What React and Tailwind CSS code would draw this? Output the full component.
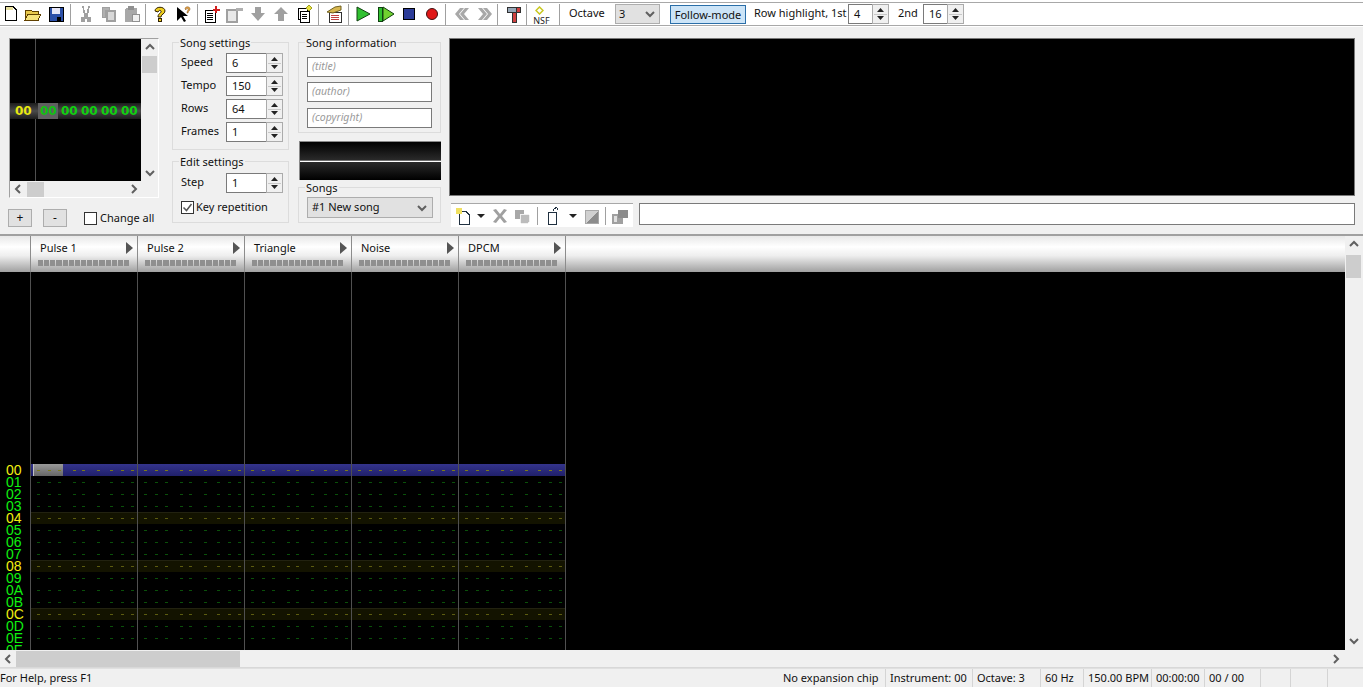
import React from 'react';

const uiFont = "font-['Noto_Sans','Liberation_Sans',sans-serif]";

const Sep = ({ l = 0, r = 0 }) => (
  <div className="w-px h-[21px] bg-[#a0a0a0] shrink-0" style={{ marginLeft: l, marginRight: r }} />
);

const Ic = ({ children, w = 23, l = 0 }) => (
  <div className="h-[23px] flex items-center justify-center shrink-0" style={{ width: w, marginLeft: l }}>
    <svg width="18" height="18" viewBox="0 0 18 18" shapeRendering="crispEdges">{children}</svg>
  </div>
);

// small chevrons used on all scroll bars
const Chev = ({ dir }) => {
  const d = {
    up: 'M2 8 L6 4 L10 8',
    down: 'M2 4 L6 8 L10 4',
    left: 'M8 2 L4 6 L8 10',
    right: 'M4 2 L8 6 L4 10',
  }[dir];
  return (
    <svg width="12" height="12" viewBox="0 0 12 12" className="shrink-0">
      <path d={d} fill="none" stroke="#606060" strokeWidth="2" />
    </svg>
  );
};

const Spin = ({ value, w = 40 }) => (
  <div className="flex h-[20px] bg-white shrink-0">
    <div className="border border-[#7a7a7a] border-r-0 text-[11px] leading-[18px] pl-[5px] text-[#111]" style={{ width: w }}>
      {value}
    </div>
    <div className="w-[17px] border border-[#ababab] bg-[#f0f0f0] flex flex-col items-center justify-between py-[2px]">
      <svg width="9" height="6" viewBox="0 0 9 6"><path d="M4.500 1 L8 5 H1 Z" fill="#222" /></svg>
      <div className="w-[13px] h-px bg-[#c8c8c8]" />
      <svg width="9" height="6" viewBox="0 0 9 6"><path d="M1 1 H8 L4.500 5 Z" fill="#222" /></svg>
    </div>
  </div>
);

const Group = ({ title, className, children }) => (
  <div className={`relative border border-[#dcdcdc] ${className}`}>
    <span className="absolute left-[6px] -top-[6px] bg-[#f0f0f0] px-px text-[11px] leading-[12px] text-[#111]">{title}</span>
    {children}
  </div>
);

const SettingRow = ({ label, value }) => (
  <div className="flex items-center justify-between h-[20px]">
    <span className="text-[11px] leading-[18px] mb-[2px] text-[#111]">{label}</span>
    <Spin value={value} />
  </div>
);

const InfoField = ({ text, className = '' }) => (
  <div className={`h-[20px] border border-[#7a7a7a] bg-white px-[4px] text-[10.500px] leading-[17px] italic text-[#9a9a9a] ${className}`}>{text}</div>
);

const channels = ['Pulse 1', 'Pulse 2', 'Triangle', 'Noise', 'DPCM'];
const rows = ['00', '01', '02', '03', '04', '05', '06', '07', '08', '09', '0A', '0B', '0C', '0D', '0E', '0F'];
const dashGaps = [6, 8, 7, 12, 6, 12, 10, 8, 7];

const PatternRow = ({ index, first }) => {
  const current = index === 0;
  const hl = index % 4 === 0 && !current;
  const bg = current
    ? 'bg-[linear-gradient(#34348c,#20206a)]'
    : hl
      ? 'bg-[#131300] border-t border-[#222210]'
      : '';
  const dash = current ? 'bg-[#7c7c18]' : hl ? 'bg-[#5c5c10]' : 'bg-[#0a500a]';
  return (
    <div className={`relative h-[12px] flex items-center shrink-0 ${bg}`}>
      {current && first && (
        <div className="absolute left-[2px] top-0 w-[30px] h-[12px] bg-[linear-gradient(#9a9a9a,#666)] border-l border-[#c0c0c0]" />
      )}
      {dashGaps.map((g, i) => (
        <div key={i} className={`relative w-[3px] h-px shrink-0 ${dash}`} style={{ marginLeft: g }} />
      ))}
    </div>
  );
};

export default function App() {
  return (
    <div className={`w-[1363px] h-[687px] overflow-hidden flex flex-col bg-[#f0f0f0] ${uiFont}`}>
      {/* toolbar */}
      <div className="h-[27px] bg-white pt-[2px] shrink-0">
        <div className="h-[24px] border-y border-[#a8a8a8] flex items-center text-[11px] text-[#111] whitespace-nowrap">
          <Ic w={22}>
            <path d="M3.500 1.500 H11 L14.500 5 V15.500 H3.500 Z" fill="#fff" stroke="#000" />
            <rect x="4" y="2" width="7" height="3" fill="#e8e0a0" />
          </Ic>
          <Ic w={22}>
            <path d="M1 5 H7 L8 6 H14 V15 H1 Z" fill="#e8c84c" stroke="#604000" />
            <path d="M4 9 H17 L14 15 H1 Z" fill="#f6e27a" stroke="#604000" />
          </Ic>
          <Ic>
            <rect x="2" y="2" width="14" height="14" fill="#2c50a8" stroke="#000" />
            <rect x="5" y="3" width="8" height="6" fill="#e8e8f8" />
            <rect x="10" y="12" width="4" height="4" fill="#000" />
          </Ic>
          <Sep l={3} r={3} />
          <Ic>
            <path d="M5 1 L7 1 L8 8 H10 L11 1 L13 1 L11 10 V12 H14 V17 H10 V14 H8 V17 H4 V12 H7 V10 Z" fill="#a0a0a0" />
          </Ic>
          <Ic>
            <path d="M2 2 H9 V5 H5 V12 H2 Z" fill="#b0b0b0" stroke="#a0a0a0" />
            <path d="M7 6 H15 V16 H7 Z" fill="#d8d8d8" stroke="#a0a0a0" strokeWidth="2" />
          </Ic>
          <Ic>
            <rect x="2" y="3" width="12" height="14" rx="2" fill="#a8a8a8" />
            <rect x="5" y="1" width="6" height="4" fill="#909090" />
            <rect x="9" y="9" width="7" height="7" fill="#f0f0f0" stroke="#909090" />
          </Ic>
          <Sep l={2} r={2} />
          <Ic>
            <path d="M4 6 C4 1 14 1 14 6 C14 9 10 9 10 12 H7 C7 8 11 8 10 6 C9 5 8 5 7 7 Z" fill="#f0d020" stroke="#302000" shapeRendering="auto" />
            <rect x="7" y="13" width="3" height="3" fill="#f0d020" stroke="#302000" />
          </Ic>
          <Ic>
            <path d="M3 2 V16 L7 12 L10 17 L12 16 L9 11 L14 11 Z" fill="#000" shapeRendering="auto" />
            <path d="M11 4 C11 1 16 1 16 4 C16 6 14 6 14 8 H13 C13 5 15 5 14 4 C13 3 12 4 12 5 Z" fill="#e0a040" stroke="#805020" strokeWidth=".5" shapeRendering="auto" />
          </Ic>
          <Sep l={3} r={2} />
          <Ic>
            <rect x="2" y="5" width="10" height="12" fill="#fff" stroke="#000" />
            <path d="M4 8 H10 M4 10 H10 M4 12 H10 M4 14 H10" stroke="#000" />
            <path d="M13 1 V8 M10 4.500 H17" stroke="#d02020" strokeWidth="2" />
          </Ic>
          <Ic>
            <rect x="1" y="5" width="10" height="12" fill="#e8e8e8" stroke="#a0a0a0" strokeWidth="2" />
            <rect x="10" y="3" width="7" height="3" fill="#b0b0b0" />
          </Ic>
          <Ic>
            <path d="M6 2 H12 V8 H16 L9 16 L2 8 H6 Z" fill="#a0a0a0" shapeRendering="auto" />
          </Ic>
          <Ic>
            <path d="M6 16 H12 V9 H16 L9 2 L2 9 H6 Z" fill="#a0a0a0" shapeRendering="auto" />
          </Ic>
          <Ic>
            <rect x="3" y="3" width="9" height="11" fill="#fff" stroke="#000" />
            <rect x="5" y="6" width="9" height="11" fill="#fff" stroke="#000" />
            <path d="M7 9 H12 M7 11 H12 M7 13 H12" stroke="#000" />
            <path d="M14 0 L17 3 L14 6 L11 3 Z" fill="#e8e040" stroke="#a0a020" shapeRendering="auto" />
          </Ic>
          <Sep l={3} r={3} />
          <Ic>
            <rect x="4" y="7" width="12" height="10" fill="#fff" stroke="#303030" />
            <path d="M6 10 H14 M6 12 H14 M6 14 H14" stroke="#c04040" />
            <path d="M2 7 L10 2 L16 1 L16 5 L8 8 Z" fill="#d8b850" stroke="#706020" shapeRendering="auto" />
          </Ic>
          <Sep l={3} r={2} />
          <Ic>
            <path d="M3 2 L16 9 L3 16 Z" fill="#30c030" stroke="#104010" shapeRendering="auto" />
          </Ic>
          <Ic>
            <rect x="1" y="2" width="4" height="14" fill="#30c030" stroke="#104010" />
            <path d="M6 2 L17 9 L6 16 Z" fill="#70d030" stroke="#104010" shapeRendering="auto" />
          </Ic>
          <Ic>
            <rect x="3" y="3" width="11" height="11" fill="#2c3c98" stroke="#000" />
          </Ic>
          <Ic>
            <circle cx="9" cy="9" r="5.500" fill="#e01818" stroke="#401010" shapeRendering="auto" />
          </Ic>
          <Sep l={2} r={4} />
          <Ic>
            <path d="M7 3 H11 L6 9 L11 15 H7 L2 9 Z M12 3 H16 L11 9 L16 15 H12 L7 9 Z" fill="#a8a8a8" shapeRendering="auto" />
          </Ic>
          <Ic>
            <path d="M2 3 H6 L11 9 L6 15 H2 L7 9 Z M7 3 H11 L16 9 L11 15 H7 L12 9 Z" fill="#a8a8a8" shapeRendering="auto" />
          </Ic>
          <Sep l={1} r={4} />
          <Ic>
            <rect x="2" y="2" width="13" height="5" fill="#98a8b8" stroke="#303030" />
            <rect x="11" y="2" width="4" height="5" fill="#d04040" stroke="#303030" />
            <rect x="7" y="7" width="4" height="10" fill="#d04040" stroke="#303030" />
          </Ic>
          <Sep l={1} />
          <div className="relative w-[29px] h-[23px] shrink-0 flex flex-col items-center justify-end">
            <svg className="absolute left-[8px] top-[3px]" width="9" height="9" viewBox="0 0 9 9">
              <path d="M4.500 1 L8 4.500 L4.500 8 L1 4.500 Z" fill="none" stroke="#c8c820" strokeWidth="1.500" />
            </svg>
            <span className="text-[9px] leading-[11px] text-[#222]">NSF</span>
          </div>
          <Sep l={3} />
          <span className="ml-[9px] w-[46px] shrink-0 mb-[2px]">Octave</span>
          <div className="w-[45px] h-[20px] shrink-0 bg-[#e1e1e1] border border-[#adadad] flex items-center justify-between pl-[3px] pr-[3px]">
            <span>3</span>
            <Chev dir="down" />
          </div>
          <div className="ml-[10px] w-[76px] h-[19px] mt-[1px] shrink-0 bg-[#cce4f7] border border-[#2a6ea8] text-center leading-[17px]">Follow-mode</div>
          <span className="ml-[8px] w-[94px] shrink-0 mb-[2px]">Row highlight, 1st</span>
          <Spin value="4" w={24} />
          <span className="ml-[9px] w-[25px] shrink-0 mb-[2px]">2nd</span>
          <Spin value="16" w={24} />
        </div>
      </div>

      {/* controls panel */}
      <div className="h-[209px] shrink-0 flex pl-[9px] pt-[11px] border-b-2 border-[#a0a0a0] text-[11px] text-[#111]">
        <div className="w-[163px] shrink-0">
          <div className="w-[150px] h-[160px] border border-[#a0a0a0] border-r-white border-b-white bg-[#f0f0f0] flex flex-col">
            <div className="flex h-[142px]">
              <div className="w-[132px] bg-black relative flex flex-col justify-center">
                <div className="absolute left-[25px] top-0 bottom-0 w-px bg-[#505050]" />
                <div className="relative mt-[2px] h-[16px] bg-[linear-gradient(#1c1c1c,#4a4a4a_50%,#1c1c1c)] flex items-center font-['DejaVu_Sans',sans-serif] font-bold text-[12px]">
                  <span className="w-[28px] pl-[5px] text-[#e8e810]">00</span>
                  <span className="w-[20px] h-[16px] bg-[#606060] pl-[2px] text-[#10c010] leading-[16px]">00</span>
                  <span className="w-[20px] pl-[3px] text-[#10d010]">00</span>
                  <span className="w-[20px] pl-[3px] text-[#10d010]">00</span>
                  <span className="w-[20px] pl-[3px] text-[#10d010]">00</span>
                  <span className="w-[20px] pl-[3px] text-[#10d010]">00</span>
                </div>
              </div>
              <div className="w-[17px] flex flex-col items-center py-[2px]">
                <Chev dir="up" />
                <div className="mt-[3px] w-[15px] h-[17px] bg-[#cdcdcd]" />
                <div className="flex-1" />
                <Chev dir="down" />
              </div>
            </div>
            <div className="w-[132px] h-[16px] flex items-center pl-[2px] pr-[2px]">
              <Chev dir="left" />
              <div className="ml-[3px] w-[17px] h-[15px] bg-[#cdcdcd]" />
              <div className="flex-1" />
              <Chev dir="right" />
            </div>
          </div>
          <div className="flex items-center mt-[11px] -ml-px">
            <div className="w-[24px] h-[18px] bg-[#e1e1e1] border border-[#adadad] text-center text-[12px] leading-[15px]">+</div>
            <div className="ml-[11px] w-[24px] h-[18px] bg-[#e1e1e1] border border-[#adadad] text-center text-[12px] leading-[15px]">-</div>
            <div className="ml-[17px] w-[13px] h-[13px] bg-white border border-[#333]" />
            <span className="ml-[3px]">Change all</span>
          </div>
        </div>

        <div className="w-[117px] shrink-0 pt-[4px]">
          <Group title="Song settings" className="h-[108px] pt-[10px] pl-[8px] pr-[5px]">
            <div className="flex flex-col gap-[3px]">
              <SettingRow label="Speed" value="6" />
              <SettingRow label="Tempo" value="150" />
              <SettingRow label="Rows" value="64" />
              <SettingRow label="Frames" value="1" />
            </div>
          </Group>
          <Group title="Edit settings" className="mt-[11px] h-[62px] pt-[11px] pl-[8px] pr-[5px]">
            <SettingRow label="Step" value="1" />
            <div className="flex items-center mt-[6px]">
              <div className="w-[13px] h-[13px] bg-white border border-[#333] flex items-center justify-center">
                <svg width="11" height="11" viewBox="0 0 11 11"><path d="M1.500 5.500 L4.500 8.500 L9.500 2" fill="none" stroke="#555" strokeWidth="1.500" /></svg>
              </div>
              <span className="ml-[2px]">Key repetition</span>
            </div>
          </Group>
        </div>

        <div className="ml-[9px] w-[143px] shrink-0 pt-[4px]">
          <Group title="Song information" className="h-[91px] pt-[14px] pl-[8px] pr-[8px]">
            <div className="flex flex-col gap-[5px]">
              <InfoField text="(title)" />
              <InfoField text="(author)" />
              <InfoField text="(copyright)" className="mt-px" />
            </div>
          </Group>
          <div className="mt-[8px] ml-px h-[39px] border-t border-l border-[#8a8a8a] flex flex-col">
            <div className="flex-1 bg-[linear-gradient(#000,#2a2a2a)] border-b border-[#707070]" />
            <div className="h-px bg-white" />
            <div className="flex-1 bg-[linear-gradient(#2a2a2a,#000)]" />
          </div>
          <Group title="Songs" className="mt-[7px] h-[36px] pt-[9px] pl-[8px] pr-[7px]">
            <div className="h-[21px] bg-[#e1e1e1] border border-[#adadad] flex items-center justify-between pl-[4px] pr-[4px]">
              <span>#1 New song</span>
              <Chev dir="down" />
            </div>
          </Group>
        </div>

        <div className="ml-[8px] w-[906px] shrink-0">
          <div className="h-[158px] bg-black border border-[#7a7a7a]" />
          <div className="flex mt-[7px]">
            <div className="ml-[2px] w-[182px] h-[24px] bg-white border-t border-[#a8a8a8] flex items-center pl-[3px]">
              <Ic w={18}>
                <path d="M5.500 4.500 H12 L15.500 8 V17.500 H5.500 Z" fill="#fff" stroke="#203040" />
                <rect x="2" y="1" width="6" height="6" fill="#f0e060" />
              </Ic>
              <svg width="8" height="4" viewBox="0 0 8 4" className="ml-[5px] shrink-0"><path d="M0 0 H8 L4 4 Z" fill="#222" /></svg>
              <Ic w={18} l={6}>
                <path d="M2 3 L5 2 L9 7 L13 2 L16 3 L11 9 L16 15 L13 16 L9 11 L5 16 L2 15 L7 9 Z" fill="#a0a0a0" shapeRendering="auto" />
              </Ic>
              <Ic w={18} l={4}>
                <rect x="2" y="3" width="9" height="9" rx="1" fill="#a8a8a8" />
                <rect x="7" y="7" width="9" height="9" rx="1" fill="#bcbcbc" stroke="#f0f0f0" />
              </Ic>
              <div className="ml-[6px] w-px h-[18px] bg-[#a0a0a0] shrink-0" />
              <Ic w={18} l={6}>
                <path d="M4.500 5.500 H12.500 V17.500 H4.500 Z" fill="#fff" stroke="#203040" />
                <path d="M9 4 C10 0 14 0 14 3" fill="none" stroke="#203040" />
              </Ic>
              <svg width="8" height="4" viewBox="0 0 8 4" className="ml-[7px] shrink-0"><path d="M0 0 H8 L4 4 Z" fill="#222" /></svg>
              <Ic w={18} l={6}>
                <rect x="2" y="3" width="14" height="14" fill="#a8a8a8" />
                <path d="M3 16 L15 4 V16 Z" fill="#8c8c8c" />
                <path d="M3 16 L15 4 H3 Z" fill="#d0d0d0" />
              </Ic>
              <div className="ml-[4px] w-px h-[18px] bg-[#a0a0a0] shrink-0" />
              <Ic w={18} l={5}>
                <rect x="1" y="7" width="11" height="10" fill="#a0a0a0" />
                <rect x="7" y="3" width="10" height="8" fill="#8c8c8c" />
                <rect x="3" y="9" width="3" height="6" fill="#e0e0e0" />
              </Ic>
            </div>
            <div className="ml-[6px] w-[716px] h-[22px] bg-white border border-[#7a7a7a]" />
          </div>
        </div>
      </div>

      {/* pattern editor */}
      <div className="flex h-[414px] shrink-0">
        <div className="w-[1345px] flex flex-col shrink-0">
          <div className="h-[36px] flex shrink-0 bg-[linear-gradient(#e8e8e8,#fff_30%,#eeeeee_55%,#a0a0a0)] text-[11px] text-[#111]">
            <div className="w-[30px] shrink-0" />
            {channels.map((c) => (
              <div key={c} className="relative w-[107px] shrink-0 border-l border-[#8c8c8c]">
                <div className="flex items-center justify-between h-[24px] pl-[9px] pr-[4px]">
                  <span>{c}</span>
                  <svg width="7" height="12" viewBox="0 0 7 12"><path d="M0 0 L7 6 L0 12 Z" fill="#555" /></svg>
                </div>
                <div className="ml-[7px] w-[91px] h-[6px] flex gap-px">
                  {Array.from({ length: 15 }).map((_, i) => (
                    <div key={i} className="flex-1 bg-[#8f8f8f]" />
                  ))}
                </div>
              </div>
            ))}
            <div className="border-l border-[#8c8c8c]" />
          </div>
          <div className="flex-1 min-h-0 bg-black flex overflow-hidden">
            <div className="w-[30px] shrink-0 flex flex-col pt-[192px] font-['Liberation_Sans',sans-serif] text-[14px] pl-[6px]">
              {rows.map((r, i) => (
                <div key={r} className={`h-[12px] leading-[12px] shrink-0 ${i % 4 === 0 ? 'text-[#f0f010]' : 'text-[#10f010]'}`}>{r}</div>
              ))}
            </div>
            {channels.map((c, ci) => (
              <div key={c} className="w-[107px] shrink-0 border-l border-[#505050] flex flex-col pt-[192px]">
                {rows.map((r, i) => (
                  <PatternRow key={r} index={i} first={ci === 0} />
                ))}
              </div>
            ))}
            <div className="w-px bg-[#505050]" />
          </div>
        </div>
        <div className="w-[17px] flex flex-col items-center pt-[2px] pb-[3px]">
          <Chev dir="up" />
          <div className="mt-[5px] w-[15px] h-[23px] bg-[#cdcdcd]" />
          <div className="flex-1" />
          <Chev dir="down" />
        </div>
      </div>
      <div className="h-[18px] shrink-0 flex items-center pr-[21px] border-b border-[#d8d8d8]">
        <div className="w-[16px] flex justify-center"><Chev dir="left" /></div>
        <div className="w-[224px] h-[16px] bg-[#cdcdcd]" />
        <div className="flex-1" />
        <Chev dir="right" />
      </div>

      {/* status bar */}
      <div className="flex-1 flex items-center text-[11px] text-[#111] border-t border-[#e0e0e0]">
        <span className="w-[783px] shrink-0">For Help, press F1</span>
        <StatusPane w={103}>No expansion chip</StatusPane>
        <StatusPane w={87} pl={4}>Instrument: 00</StatusPane>
        <StatusPane w={68} pl={4}>Octave: 3</StatusPane>
        <StatusPane w={43} pl={4}>60 Hz</StatusPane>
        <StatusPane w={68} pl={4}>150.00 BPM</StatusPane>
        <StatusPane w={53} pl={4}>00:00:00</StatusPane>
        <StatusPane w={56} pl={4}>00 / 00</StatusPane>
        <StatusPane w={30} />
        <StatusPane w={37} />
      </div>
    </div>
  );
}

function StatusPane({ w, pl = 0, children }) {
  return (
    <div className="h-[18px] shrink-0 border-r border-[#d4d4d4] whitespace-nowrap leading-[18px]" style={{ width: w, paddingLeft: pl }}>
      {children}
    </div>
  );
}
